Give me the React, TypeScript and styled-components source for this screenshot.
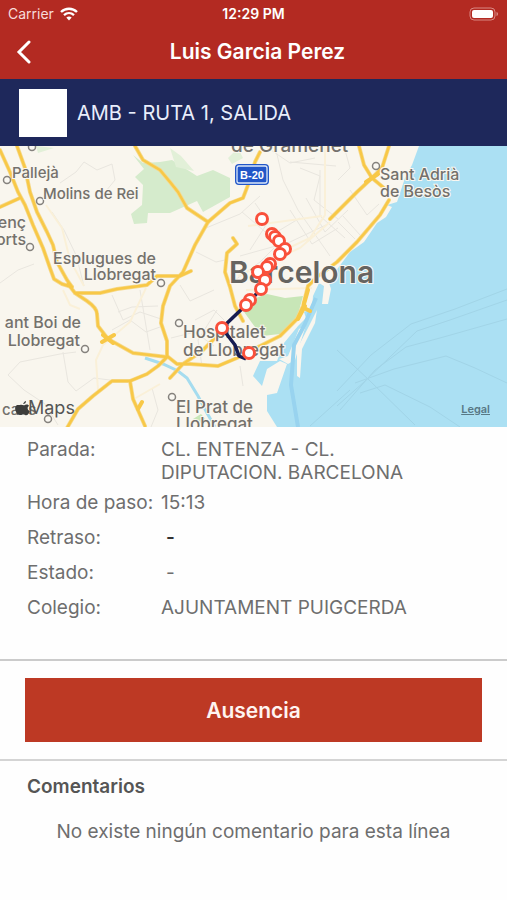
import React from "react";
import styled, { createGlobalStyle } from "styled-components";

const GlobalStyle = createGlobalStyle`
  * { box-sizing: border-box; }
  body {
    margin: 0;
    background: #fefefe;
    color: #6e6e6e;
    font-family: Inter, "Liberation Sans", sans-serif;
  }
`;

const Screen = styled.main`
  display: flex;
  flex-direction: column;
  min-height: 100vh;
`;

const Header = styled.header`
  background: #b32a22;
  color: #fff;
`;

const StatusBar = styled.div`
  display: grid;
  grid-template-columns: 1fr auto 1fr;
  align-items: center;
  height: 27px;
  padding: 0 8px;
  font-size: 14px;
`;

const Carrier = styled.span`
  display: flex;
  align-items: center;
  gap: 6px;
  color: #f7dcda;
  font-size: 14px;
`;

const Clock = styled.time`
  font-weight: 600;
`;

const BatteryIcon = styled.svg`
  justify-self: end;
`;

const NavBar = styled.div`
  display: grid;
  grid-template-columns: 48px 1fr 48px;
  align-items: center;
  height: 52px;
  padding-bottom: 2px;
`;

const Title = styled.h1`
  margin: 0;
  padding-left: 8px;
  text-align: center;
  font-size: 21px;
  font-weight: 600;
  line-height: 28px;
`;

const IconButton = styled.button<{ $end?: boolean }>`
  display: flex;
  justify-content: ${(p) => (p.$end ? "flex-end" : "flex-start")};
  padding: 8px ${(p) => (p.$end ? "24px" : "16px")};
  border: 0;
  background: none;
  color: inherit;
  cursor: pointer;
`;

const RouteBar = styled.div`
  display: flex;
  align-items: center;
  gap: 10px;
  height: 67px;
  padding: 0 19px;
  background: #1e285b;
  color: #e9eefb;
  font-size: 20px;
`;

const RouteLogo = styled.div`
  width: 48px;
  height: 48px;
  background: #fff;
`;

const MapArea = styled.section`
  position: relative;
  height: 281px;
  overflow: hidden;
`;

const MapDrawing = styled.svg`
  display: block;
  width: 100%;
  height: 100%;
`;

const LegalLink = styled.a`
  position: absolute;
  right: 17px;
  bottom: 11px;
  color: #587986;
  font-size: 11px;
  font-weight: 600;
  line-height: 14px;
`;

const Details = styled.dl`
  display: grid;
  grid-template-columns: 134px 1fr;
  grid-auto-rows: minmax(35px, auto);
  margin: 0;
  padding: 11px 27px 28px;
  font-size: 19px;
  line-height: 23px;
`;

const Term = styled.dt`
  white-space: nowrap;
`;

const Value = styled.dd<{ $narrow?: boolean; $dash?: boolean; $strong?: boolean }>`
  margin: 0;
  padding-bottom: 7px;
  max-width: ${(p) => (p.$narrow ? "250px" : "none")};
  padding-left: ${(p) => (p.$dash ? "5px" : "0")};
  color: ${(p) => (p.$strong ? "#333" : "inherit")};
  font-weight: ${(p) => (p.$strong ? 600 : 400)};
`;

const Actions = styled.section`
  padding: 17px 25px;
  border-top: 2px solid #cbcbcb;
  border-bottom: 2px solid #d4d4d4;
`;

const AbsenceButton = styled.button`
  display: block;
  width: 100%;
  height: 64px;
  border: 0;
  background: #bd3924;
  color: #fff4f1;
  font: inherit;
  font-size: 21px;
  font-weight: 600;
  cursor: pointer;
`;

const Comments = styled.section`
  padding: 14px 27px;
`;

const CommentsTitle = styled.h2`
  margin: 0 0 20px;
  color: #555;
  font-size: 19px;
  font-weight: 600;
  line-height: 24px;
`;

const EmptyText = styled.p`
  margin: 0;
  text-align: center;
  font-size: 19px;
  line-height: 26px;
`;

const ROADS = [
  "M0 150L10 172L18 192L25 205L33 225L43 248L50 268L54 279L62 284L72 287",
  "M17 146L25 168L30 192L37 212L47 232L53 245L57 262L67 280L72 287",
  "M0 207L20 198",
  "M68 284L75 293L87 301Q97 308 97 314L98 326L108 339L133 353L167 357",
  "M75 293L100 293L117 289L147 285L157 276L180 276L191 271",
  "M167 356L167 341L161 323L163 306L170 286L183 272L195 245L208 222L230 203L243 198L248 185L255 162L260 152",
  "M135 146L143 160L160 170L170 182L178 192L187 208L208 222",
  "M233 238L237 244L227 253L225 272L230 287L235 306L243 321",
  "M167 357L158 366L147 374L130 381H112L93 396L78 409L67 428",
  "M130 381L133 399L145 426",
  "M167 356L177 364H190L218 366L237 358L260 346L280 336L297 319L303 306L308 286L317 277L337 262L357 242L380 215L389 200",
  "M170 378L183 364L202 351L217 336",
  "M330 219L357 192L372 178L382 168L389 146",
  "M359 146L364 165L372 178L384 188",
];

const STREETS =
  "M60 183L76 172L84 162L97 170L112 164L115 180L106 191M0 283L18 270L34 264M52 212L64 230L76 255L84 286M8 375L20 362L60 354L76 352M8 375L24 390L45 404L58 425M63 352L68 382L76 391L94 378L110 380M112 295L123 320L140 312L161 319M118 312L132 307L158 306M112 330L130 320L146 332L160 327M140 290L150 350M152 388L158 410L151 427M195 320L214 310L224 320M171 338L195 332L214 346M202 366L198 340L217 310M240 366L243 386M275 146L283 180L298 210L330 256M300 168L320 176L314 200L338 219M306 198L325 232L348 210M242 212L270 236L300 218M255 203L268 222L250 250M206 228L240 214L260 196M290 210L312 244L338 228M320 170V216L345 238M338 180L350 168L345 150M290 162L336 166M350 190L367 215L379 204M240 256L290 242L328 224M235 280L260 262L274 248M180 285L190 301L214 290M196 252L216 262L225 260M338 222L355 239M343 216L360 235M265 146L290 163L315 158";

const STOPS: [number, number][] = [
  [262, 219], [272, 234], [275, 237], [279, 241], [285, 249], [280, 254],
  [270, 264], [267, 267], [258, 272], [265, 280], [261, 289], [250, 300],
  [246, 305], [222, 328], [249, 353],
];

const TOWN_DOTS: [number, number][] = [
  [7, 180], [40, 201], [30, 247], [161, 283], [85, 349], [179, 323],
  [172, 397], [48, 419], [376, 166], [32, 147],
];

type Label = { x: number; y: number; text: string; size?: number; end?: boolean };

const LABELS: Label[] = [
  { x: 231, y: 152, text: "de Gramenet", size: 19 },
  { x: 12, y: 178, text: "Pallejà", size: 15 },
  { x: 43, y: 199, text: "Molins de Rei", size: 15 },
  { x: 26, y: 228, text: "enç", end: true },
  { x: 26, y: 245, text: "orts", end: true },
  { x: 156, y: 264, text: "Esplugues de", end: true },
  { x: 156, y: 280, text: "Llobregat", end: true },
  { x: 81, y: 328, text: "ant Boi de", end: true },
  { x: 80, y: 346, text: "Llobregat", end: true },
  { x: 183, y: 338, text: "Hospitalet", size: 17 },
  { x: 183, y: 356, text: "de Llobregat", size: 17 },
  { x: 176, y: 413, text: "El Prat de", size: 17 },
  { x: 176, y: 430, text: "Llobregat", size: 17 },
  { x: 380, y: 180, text: "Sant Adrià" },
  { x: 380, y: 197, text: "de Besòs" },
  { x: 2, y: 415, text: "cans", size: 15 },
];

const MapLabel = styled.text<{ $size: number }>`
  font-size: ${(p) => p.$size}px;
  font-weight: ${(p) => (p.$size > 20 ? 600 : 500)};
  fill: ${(p) => (p.$size > 20 ? "#666460" : "#74716c")};
  stroke: #faf7f0;
  stroke-width: 2px;
  paint-order: stroke;
`;

const ShieldText = styled.text`
  font-family: "Liberation Sans", sans-serif;
  font-size: 11px;
  font-weight: 700;
  fill: #fff;
`;

const Brand = styled.text`
  font-size: 18px;
  fill: #555;
`;

function RouteMap() {
  return (
    <MapArea aria-label="Mapa de la ruta">
      <MapDrawing viewBox="0 146 507 281" preserveAspectRatio="xMidYMid slice">
        <rect x="-200" y="146" width="420" height="281" fill="#f9f6ee" />
        <rect x="220" y="146" width="900" height="281" fill="#abe0f3" />
        <path
          d="M0 146H419L412 165L405 178L397 202L387 205L392 207L386 217L377 223L364 242L350 252L338 268L329 283L331 289L328 304L322 304L324 286L319 283L313 296L312 308L304 312L306 318L298 326L284 343L277 361H260L253 376L262 386L267 369L280 361L287 364L277 393L267 395V411L277 427H0Z"
          fill="#f9f6ee"
        />
        <path d="M279 359L288 356L299 329L306 325L295 360L288 364Z" fill="#f9f6ee" />
        <path d="M317 310L309 326L297 349V376L300 378L302 349L315 323Z" fill="#f9f6ee" />
        <path d="M316 298L304 326L294 345L291 385L298 427" fill="none" stroke="#98d3ef" strokeWidth="4" />
        <path
          d="M133 155L143 163L160 162L172 160L197 176L213 170L230 178V197L203 212L197 201L170 213L148 213L147 223L134 224L131 214L142 205L143 185L135 177L144 169Z"
          fill="#d5ebcc"
        />
        <path d="M170 148L181 156L194 171L176 167ZM36 146L54 148L38 153ZM228 158L238 148L243 158L232 164Z" fill="#e2f0d8" />
        <path
          d="M242 309L253 299L267 294L285 298L303 296L297 318L280 334L262 336L252 323Z"
          fill="#c8e6b7"
        />
        <path d="M193 419L201 414L207 421L203 424Z" fill="#c8e6b7" />
        <path d={STREETS} fill="none" stroke="#e9e6df" strokeWidth="1" />
        <path
          d="M46 205L62 228L70 260L84 286M63 290L70 305L80 309M98 390L96 360L103 345L130 322L146 288M134 399L160 384M325 146V215L310 238L278 253M248 226L322 216M238 276L300 248L330 222M246 290L312 288"
          fill="none"
          stroke="#faf0d8"
          strokeWidth="2"
        />
        <path
          d="M145 358L163 364L178 371L187 378L198 396L207 413L215 427"
          fill="none"
          stroke="#a5dcef"
          strokeWidth="3"
        />
        <g fill="none" strokeLinecap="round" strokeLinejoin="round">
          {ROADS.map((d) => (
            <path key={d} d={d} stroke="#f5d98c" strokeWidth="4" />
          ))}
          {ROADS.map((d) => (
            <path key={d} d={d} stroke="#f8c847" strokeWidth="2.500" />
          ))}
          <path d="M102 342L114 335M103 335L113 343M138 409L142 402M298 319L305 306M304 304L308 290M304 308L310 311M366 182L378 174" stroke="#f8c847" strokeWidth="4" />
        </g>
        <g fill="none" stroke="#a1d4e7" strokeWidth="1">
          <path d="M337 391L371 355L411 324L455 309L507 289M337 406L364 382L417 331L450 320L507 300M340 410L375 370L406 347L440 338L507 319M355 383L394 369L446 356L475 368L507 383M337 350L369 380L415 425M360 393L385 385L430 407L460 427M310 426L350 390" />
        </g>
        {TOWN_DOTS.map(([x, y]) => (
          <circle key={`${x}-${y}`} cx={x} cy={y} r="3.5" fill="#faf8f2" stroke="#85827d" strokeWidth="1.5" />
        ))}
        {LABELS.map((l) => (
          <MapLabel key={`${l.x}-${l.y}`} x={l.x} y={l.y} $size={l.size ?? 16} textAnchor={l.end ? "end" : "start"}>
            {l.text}
          </MapLabel>
        ))}
        <MapLabel x="229" y="283" $size={30}>Barcelona</MapLabel>
        <rect x="235" y="164" width="34" height="21" rx="4" fill="#2256c8" />
        <rect x="237" y="166" width="30" height="17" rx="2" fill="#2256c8" stroke="#dbe7f8" strokeWidth="1.3" />
        <ShieldText x="252" y="179" textAnchor="middle">B-20</ShieldText>
        <path
          d="M261 289L246 305L222 328L235 345L239 356L246 359"
          fill="none"
          stroke="#171d51"
          strokeWidth="3.5"
        />
        {STOPS.map(([x, y]) => (
          <circle key={`${x}-${y}`} cx={x} cy={y} r="5.5" fill="#fff" stroke="#f9503b" strokeWidth="3" />
        ))}
        <path
          d="M23 404C24 402 25 401 26 401C26 403 25 404 23 404ZM20 405C22 404 23 406 25 405C27 404 29 405 29 406C27 407 27 410 30 411C29 414 27 416 25 415C23 414 22 415 20 415C16 415 13 407 17 405C18 405 19 405 20 405Z"
          fill="#3d3d3b"
        />
        <Brand x="28" y="414">Maps</Brand>
      </MapDrawing>
      <LegalLink href="#legal">Legal</LegalLink>
    </MapArea>
  );
}

export default function App() {
  return (
    <Screen>
      <GlobalStyle />
      <Header>
        <StatusBar>
          <Carrier>
            Carrier
            <svg width="18" height="14" viewBox="0 0 18 14" fill="none" aria-hidden="true">
              <path d="M1 5C5.500 0.600 12.500 0.600 17 5" stroke="#fff" strokeWidth="2.400" />
              <path d="M4 8.200C7 5.400 11 5.400 14 8.200" stroke="#fff" strokeWidth="2.300" />
              <path d="M6.300 10.600C8 9.200 10 9.200 11.700 10.600L9 13.500Z" fill="#fff" />
            </svg>
          </Carrier>
          <Clock>12:29 PM</Clock>
          <BatteryIcon width="30" height="14" viewBox="0 0 30 14" aria-hidden="true">
            <rect x="1" y="1" width="25" height="12" rx="4" fill="none" stroke="#d98782" />
            <rect x="3" y="3" width="21" height="8" rx="2" fill="#fff" />
            <path d="M27.500 5V9C29.500 8.500 29.500 5.500 27.500 5Z" fill="#d98782" />
          </BatteryIcon>
        </StatusBar>
        <NavBar>
          <IconButton type="button" aria-label="Volver">
            <svg width="16" height="24" viewBox="0 0 16 24" fill="none" aria-hidden="true">
              <path d="M13 2L3 12L13 22" stroke="#fff" strokeWidth="3" strokeLinecap="round" />
            </svg>
          </IconButton>
          <Title>Luis Garcia Perez</Title>
          <IconButton type="button" aria-label="Más opciones" $end>
            <svg width="8" height="24" viewBox="0 0 8 24" fill="#fff" aria-hidden="true">
              <circle cx="4" cy="4" r="3" />
              <circle cx="4" cy="12" r="3" />
              <circle cx="4" cy="20" r="3" />
            </svg>
          </IconButton>
        </NavBar>
      </Header>
      <RouteBar>
        <RouteLogo />
        <span>AMB - RUTA 1, SALIDA</span>
      </RouteBar>
      <RouteMap />
      <Details>
        <Term>Parada:</Term>
        <Value $narrow>CL. ENTENZA - CL. DIPUTACION. BARCELONA</Value>
        <Term>Hora de paso:</Term>
        <Value>15:13</Value>
        <Term>Retraso:</Term>
        <Value $dash $strong>-</Value>
        <Term>Estado:</Term>
        <Value $dash>-</Value>
        <Term>Colegio:</Term>
        <Value>AJUNTAMENT PUIGCERDA</Value>
      </Details>
      <Actions>
        <AbsenceButton type="button">Ausencia</AbsenceButton>
      </Actions>
      <Comments>
        <CommentsTitle>Comentarios</CommentsTitle>
        <EmptyText>No existe ningún comentario para esta línea</EmptyText>
      </Comments>
    </Screen>
  );
}
